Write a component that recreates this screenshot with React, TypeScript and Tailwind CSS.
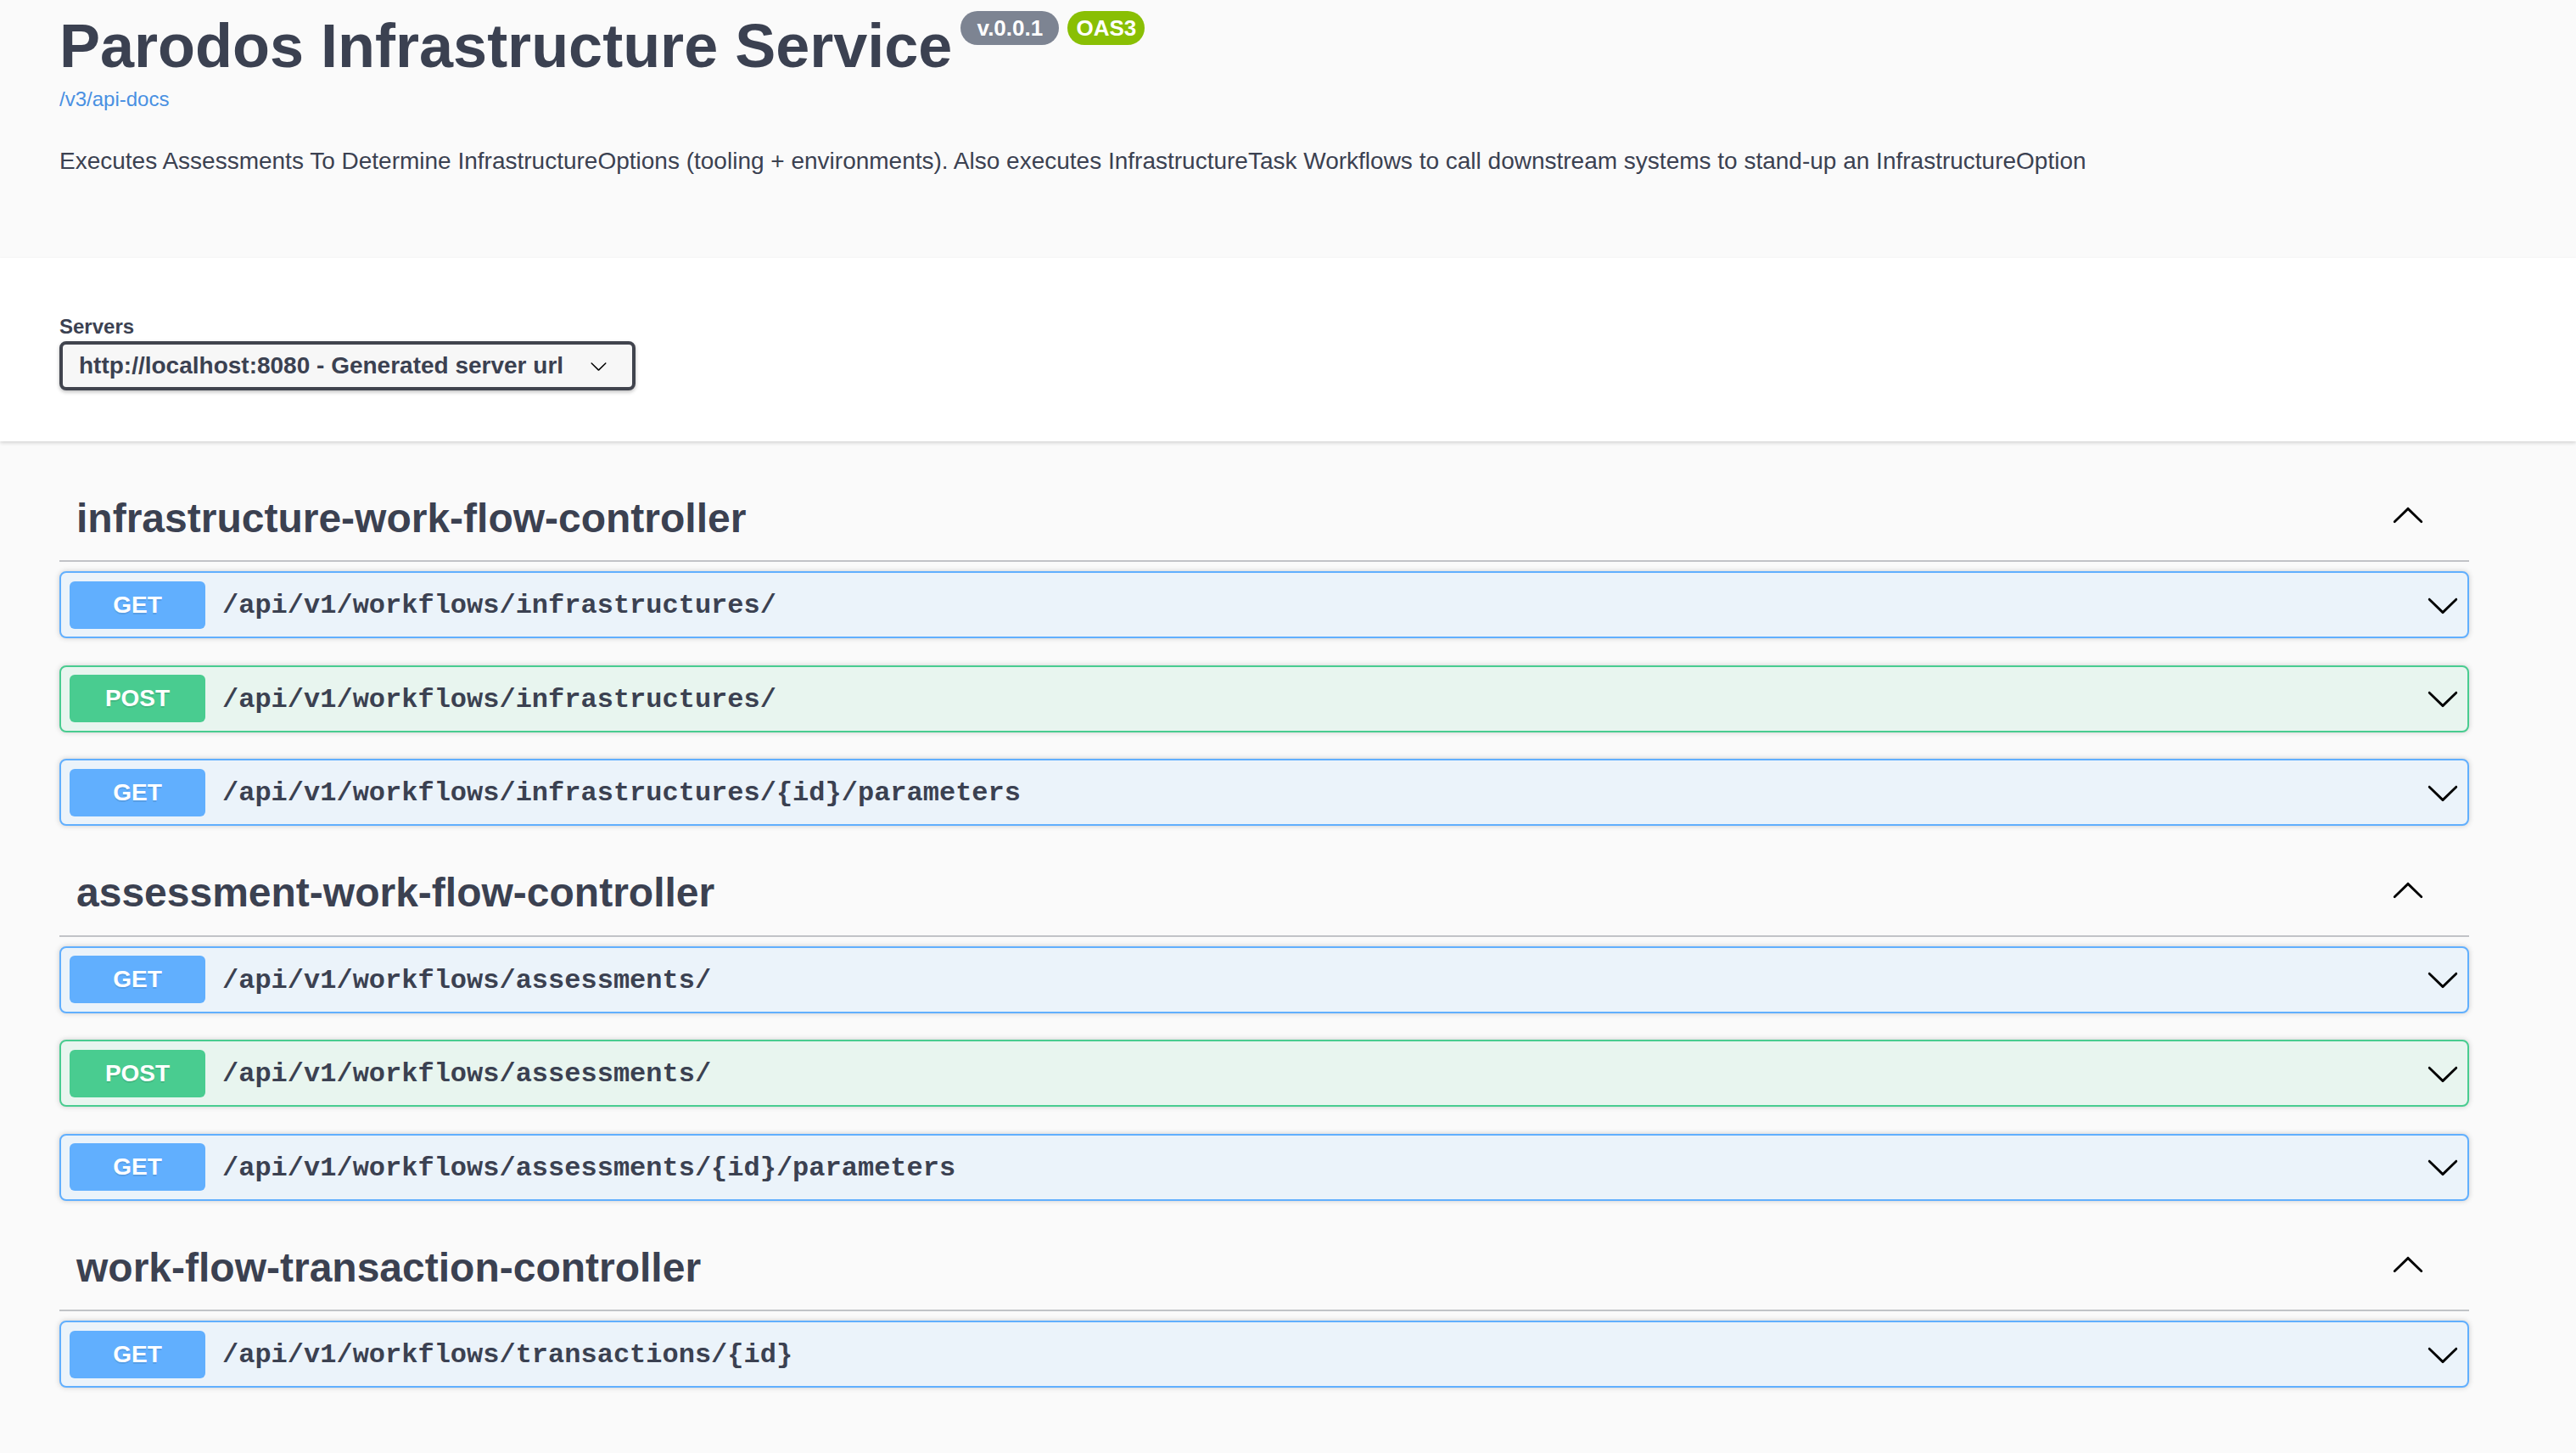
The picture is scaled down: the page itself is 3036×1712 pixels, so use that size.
import React from "react";

type Op = { method: "GET" | "POST"; path: string };
type Tag = { name: string; ops: Op[] };

const tags: Tag[] = [
  {
    name: "infrastructure-work-flow-controller",
    ops: [
      { method: "GET", path: "/api/v1/workflows/infrastructures/" },
      { method: "POST", path: "/api/v1/workflows/infrastructures/" },
      { method: "GET", path: "/api/v1/workflows/infrastructures/{id}/parameters" },
    ],
  },
  {
    name: "assessment-work-flow-controller",
    ops: [
      { method: "GET", path: "/api/v1/workflows/assessments/" },
      { method: "POST", path: "/api/v1/workflows/assessments/" },
      { method: "GET", path: "/api/v1/workflows/assessments/{id}/parameters" },
    ],
  },
  {
    name: "work-flow-transaction-controller",
    ops: [{ method: "GET", path: "/api/v1/workflows/transactions/{id}" }],
  },
];

const methodStyles = {
  GET: {
    row: "border-[#61affe] bg-[#ebf3fa]",
    badge: "bg-[#61affe]",
  },
  POST: {
    row: "border-[#49cc90] bg-[#e8f5ef]",
    badge: "bg-[#49cc90]",
  },
};

function Chevron({ className }: { className: string }) {
  return (
    <svg viewBox="0 0 20 20" className={className} aria-hidden="true">
      <path
        fill="#000"
        d="M17.418 6.109c.272-.268.709-.268.979 0s.271.701 0 .969l-7.908 7.83c-.27.268-.707.268-.979 0l-7.908-7.83c-.27-.268-.27-.701 0-.969.271-.268.709-.268.979 0L10 13.25l7.418-7.141z"
      />
    </svg>
  );
}

export default function App() {
  return (
    <div className="min-h-screen bg-[#fafafa] font-['Liberation_Sans',Arial,sans-serif] text-[#3b4151]">
      {/* Info section */}
      <div className="h-[304px] pl-[70px] pt-[13px]">
        <div className="flex items-start">
          <h2 className="mt-[5px] text-[72px] font-bold leading-[72px] text-[#3b4151]">
            Parodos Infrastructure Service
          </h2>
          <span className="ml-[10px] flex h-[40px] w-[116px] items-center justify-center rounded-full bg-[#7d8492] text-[26px] font-bold leading-[26px] text-white">
            v.0.0.1
          </span>
          <span className="ml-[10px] flex h-[40px] w-[91px] items-center justify-center rounded-full bg-[#89bf04] text-[26px] font-bold leading-[26px] text-white">
            OAS3
          </span>
        </div>
        <div className="mt-[15px] text-[24px] leading-[24px] text-[#4990e2]">
          <a href="#">/v3/api-docs</a>
        </div>
        <p className="mt-[47px] text-[28px] leading-[28px] text-[#3b4151]">
          Executes Assessments To Determine InfrastructureOptions (tooling + environments). Also executes
          InfrastructureTask Workflows to call downstream systems to stand-up an InfrastructureOption
        </p>
      </div>

      {/* Servers section */}
      <div className="h-[216px] bg-white pl-[70px] pt-[69px] shadow-[0_2px_4px_0_rgba(0,0,0,0.15)]">
        <div className="text-[24px] font-bold leading-[24px] text-[#3b4151]">Servers</div>
        <div className="mt-[5px] flex h-[58px] w-[679px] items-center rounded-[8px] border-4 border-[#41444e] bg-[#f7f7f7] pl-[19px] pr-[29px] shadow-[0_2px_4px_0_rgba(0,0,0,0.25)]">
          <span className="text-[28px] font-bold leading-[28px] text-[#3b4151]">
            http://localhost:8080 - Generated server url
          </span>
          <Chevron className="ml-auto h-[21px] w-[21px]" />
        </div>
      </div>

      {/* Tags */}
      <div className="mt-[43px] pl-[70px] pr-[126px]">
        {tags.map((tag) => (
          <div key={tag.name}>
            <div className="mb-[11px] flex h-[99px] items-center border-b-2 border-[#c1c3c7] pl-[20px] pr-[52px]">
              <h3 className="mb-[2px] text-[48px] font-bold leading-[48px] text-[#3b4151]">{tag.name}</h3>
              <Chevron className="mb-[7px] ml-auto h-[40px] w-[40px] rotate-180" />
            </div>
            {tag.ops.map((op, i) => (
              <div
                key={i}
                className={`mb-[31.5px] flex h-[79px] items-center rounded-[8px] border-2 pl-[10px] pr-[9px] shadow-[0_0_6px_rgba(0,0,0,0.19)] ${methodStyles[op.method].row}`}
              >
                <span
                  className={`flex h-[56px] w-[160px] items-center justify-center rounded-[6px] text-[28px] font-bold leading-[28px] text-white [text-shadow:0_2px_0_rgba(0,0,0,0.1)] ${methodStyles[op.method].badge}`}
                >
                  {op.method}
                </span>
                <span className="ml-[20px] pt-[3px] font-['Liberation_Mono','Courier_New',monospace] text-[32px] font-bold leading-[32px] text-[#3b4151]">
                  {op.path}
                </span>
                <Chevron className="ml-auto h-[40px] w-[40px]" />
              </div>
            ))}
          </div>
        ))}
      </div>
    </div>
  );
}
